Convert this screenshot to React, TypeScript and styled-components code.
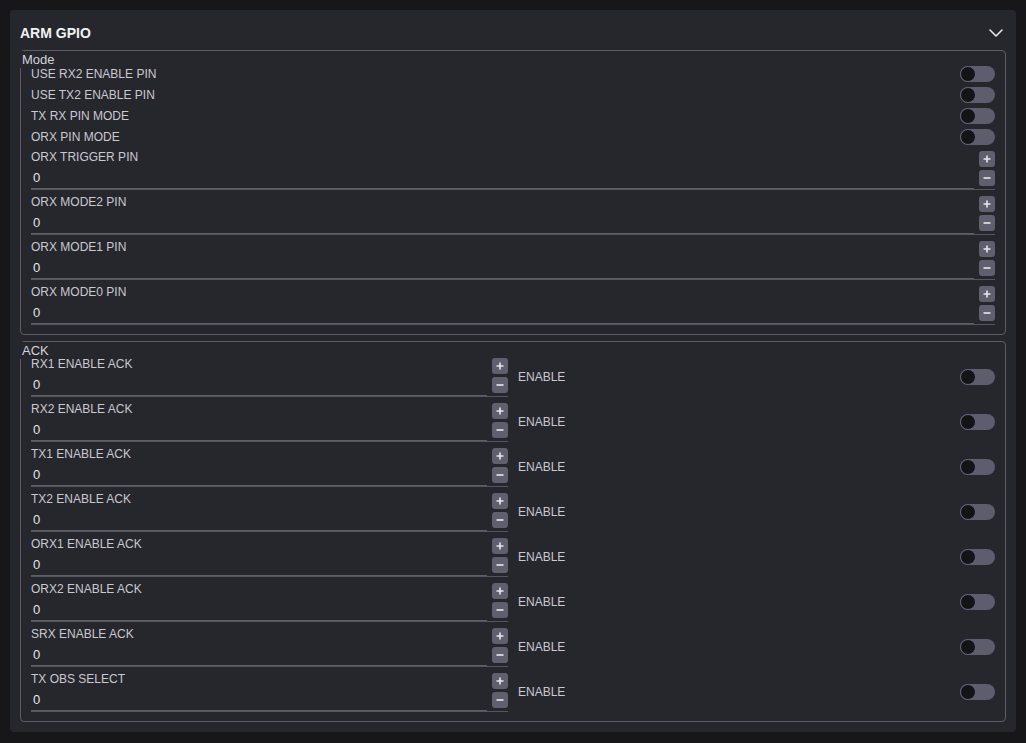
import React from "react";
import styled, { createGlobalStyle } from "styled-components";

const GlobalStyle = createGlobalStyle`
  html, body {
    margin: 0;
    padding: 0;
    background: #171719;
  }
  body {
    padding: 10px;
    font-family: "Liberation Sans", Arial, sans-serif;
    color: #c9c9d1;
  }
  * { box-sizing: border-box; }
`;

const Card = styled.section`
  background: #26262d;
  border-radius: 4px;
  padding: 10px 10px 10px 10px;
  display: flex;
  flex-direction: column;
`;

const Header = styled.header`
  height: 26px;
  margin-bottom: 4px;
  display: flex;
  align-items: center;
  justify-content: space-between;
`;

const Title = styled.h2`
  margin: 0;
  font-size: 14px;
  font-weight: 700;
  color: #f2f2f4;
`;

const Chevron = styled.svg`
  width: 14px;
  height: 8px;
  margin-right: 3px;
  stroke: #e6e6ea;
  fill: none;
  stroke-width: 1.6;
  stroke-linecap: round;
  stroke-linejoin: round;
`;

const Group = styled.div<{ $spaced?: boolean }>`
  border: 1px solid #5c5c67;
  border-radius: 4px;
  padding: 0 10px 9px 10px;
  margin-top: ${(p) => (p.$spaced ? "6px" : "0")};
  display: flex;
  flex-direction: column;
`;

const Legend = styled.div`
  align-self: flex-start;
  margin: 0 0 -5px -11px;
  padding: 0 2px 0 2px;
  background: #26262d;
  font-size: 13px;
  line-height: 17px;
  color: #d4d4da;
  position: relative;
`;

const SwitchRow = styled.div`
  height: 21px;
  display: flex;
  align-items: center;
  justify-content: space-between;
  font-size: 12px;
`;

const Track = styled.span`
  width: 35px;
  height: 16px;
  border-radius: 8px;
  background: #5d5d6d;
  display: flex;
  align-items: center;
  flex-shrink: 0;
`;

const Knob = styled.span`
  width: 16px;
  height: 16px;
  border-radius: 50%;
  background: #141416;
  border: 1px solid #62627a;
`;

const Toggle = () => (
  <Track>
    <Knob />
  </Track>
);

const Fields = styled.div`
  display: flex;
  flex-direction: column;
  gap: 2px;
`;

const Field = styled.div`
  display: flex;
  align-items: flex-end;
  padding-top: 3px;
  border-bottom: 1px solid #55555f;
`;

const FieldMain = styled.div`
  flex: 1;
  display: flex;
  flex-direction: column;
`;

const FieldLabel = styled.div`
  font-size: 12px;
  line-height: 14px;
  margin-bottom: 4px;
`;

const ValueBox = styled.div`
  height: 21px;
  line-height: 20px;
  padding: 0 2px;
  font-size: 13px;
  color: #e4e4e8;
  border-bottom: 1px solid #5e5e69;
`;

const Steppers = styled.div`
  display: flex;
  flex-direction: column;
  gap: 3px;
  margin: 0 0 3px 5px;
`;

const StepButton = styled.span`
  width: 16px;
  height: 16px;
  border-radius: 3px;
  background: #5f5f6e;
  display: flex;
  align-items: center;
  justify-content: center;
`;

const StepGlyph = styled.svg`
  width: 8px;
  height: 8px;
  stroke: #e8e8ec;
  stroke-width: 1.6;
  fill: none;
`;

const NumberField = ({ label }: { label: string }) => (
  <Field>
    <FieldMain>
      <FieldLabel>{label}</FieldLabel>
      <ValueBox>0</ValueBox>
    </FieldMain>
    <Steppers>
      <StepButton>
        <StepGlyph viewBox="0 0 8 8">
          <path d="M4 0.5V7.5M0.5 4H7.5" />
        </StepGlyph>
      </StepButton>
      <StepButton>
        <StepGlyph viewBox="0 0 8 8">
          <path d="M0.5 4H7.5" />
        </StepGlyph>
      </StepButton>
    </Steppers>
  </Field>
);

const AckRow = styled.div`
  display: grid;
  grid-template-columns: 1fr 1fr;
  column-gap: 10px;
`;

const AckSide = styled.div`
  display: flex;
  align-items: center;
  justify-content: space-between;
  padding-top: 3px;
  font-size: 12px;
`;

const modeSwitches = [
  "USE RX2 ENABLE PIN",
  "USE TX2 ENABLE PIN",
  "TX RX PIN MODE",
  "ORX PIN MODE",
];

const modeNumbers = [
  "ORX TRIGGER PIN",
  "ORX MODE2 PIN",
  "ORX MODE1 PIN",
  "ORX MODE0 PIN",
];

const ackFields = [
  "RX1 ENABLE ACK",
  "RX2 ENABLE ACK",
  "TX1 ENABLE ACK",
  "TX2 ENABLE ACK",
  "ORX1 ENABLE ACK",
  "ORX2 ENABLE ACK",
  "SRX ENABLE ACK",
  "TX OBS SELECT",
];

export default function App() {
  return (
    <>
      <GlobalStyle />
      <Card>
        <Header>
          <Title>ARM GPIO</Title>
          <Chevron viewBox="0 0 14 8">
            <polyline points="1,1 7,7 13,1" />
          </Chevron>
        </Header>

        <Group>
          <Legend>Mode</Legend>
          {modeSwitches.map((s) => (
            <SwitchRow key={s}>
              <span>{s}</span>
              <Toggle />
            </SwitchRow>
          ))}
          <Fields>
            {modeNumbers.map((n) => (
              <NumberField key={n} label={n} />
            ))}
          </Fields>
        </Group>

        <Group $spaced>
          <Legend>ACK</Legend>
          <Fields>
            {ackFields.map((n) => (
              <AckRow key={n}>
                <NumberField label={n} />
                <AckSide>
                  <span>ENABLE</span>
                  <Toggle />
                </AckSide>
              </AckRow>
            ))}
          </Fields>
        </Group>
      </Card>
    </>
  );
}
